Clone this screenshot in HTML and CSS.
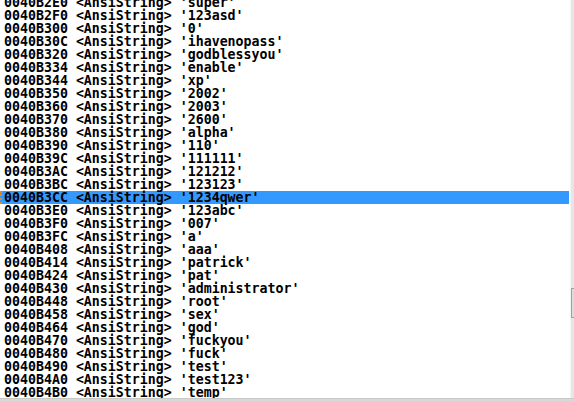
FILE: index.html
```html
<!DOCTYPE html>
<html>
<head>
<meta charset="utf-8">
<link rel="stylesheet" href="styles.css">
</head>
<body>
<div class="frame">
  <div class="top">
    <div class="list">
      <div class="row">0040B2E0 &lt;AnsiString&gt; 'super'</div>
      <div class="row">0040B2F0 &lt;AnsiString&gt; '123asd'</div>
      <div class="row">0040B300 &lt;AnsiString&gt; '0'</div>
      <div class="row">0040B30C &lt;AnsiString&gt; 'ihavenopass'</div>
      <div class="row">0040B320 &lt;AnsiString&gt; 'godblessyou'</div>
      <div class="row">0040B334 &lt;AnsiString&gt; 'enable'</div>
      <div class="row">0040B344 &lt;AnsiString&gt; 'xp'</div>
      <div class="row">0040B350 &lt;AnsiString&gt; '2002'</div>
      <div class="row">0040B360 &lt;AnsiString&gt; '2003'</div>
      <div class="row">0040B370 &lt;AnsiString&gt; '2600'</div>
      <div class="row">0040B380 &lt;AnsiString&gt; 'alpha'</div>
      <div class="row">0040B390 &lt;AnsiString&gt; '110'</div>
      <div class="row">0040B39C &lt;AnsiString&gt; '111111'</div>
      <div class="row">0040B3AC &lt;AnsiString&gt; '121212'</div>
      <div class="row">0040B3BC &lt;AnsiString&gt; '123123'</div>
      <div class="row sel">0040B3CC &lt;AnsiString&gt; '1234qwer'</div>
      <div class="row">0040B3E0 &lt;AnsiString&gt; '123abc'</div>
      <div class="row">0040B3F0 &lt;AnsiString&gt; '007'</div>
      <div class="row">0040B3FC &lt;AnsiString&gt; 'a'</div>
      <div class="row">0040B408 &lt;AnsiString&gt; 'aaa'</div>
      <div class="row">0040B414 &lt;AnsiString&gt; 'patrick'</div>
      <div class="row">0040B424 &lt;AnsiString&gt; 'pat'</div>
      <div class="row">0040B430 &lt;AnsiString&gt; 'administrator'</div>
      <div class="row">0040B448 &lt;AnsiString&gt; 'root'</div>
      <div class="row">0040B458 &lt;AnsiString&gt; 'sex'</div>
      <div class="row">0040B464 &lt;AnsiString&gt; 'god'</div>
      <div class="row">0040B470 &lt;AnsiString&gt; 'fuckyou'</div>
      <div class="row">0040B480 &lt;AnsiString&gt; 'fuck'</div>
      <div class="row">0040B490 &lt;AnsiString&gt; 'test'</div>
      <div class="row">0040B4A0 &lt;AnsiString&gt; 'test123'</div>
      <div class="row">0040B4B0 &lt;AnsiString&gt; 'temp'</div>
    </div>
    <div class="vscroll"><div class="thumb"></div></div>
  </div>
  <div class="hscroll"></div>
</div>
</body>
</html>
```
FILE: styles.css
```css
html, body {
  margin: 0;
  padding: 0;
  background: #ffffff;
  overflow: hidden;
}
.frame {
  width: 574px;
  height: 401px;
  display: flex;
  flex-direction: column;
}
.top {
  flex: 1;
  display: flex;
  overflow: hidden;
}
.list {
  flex: 1;
  margin-top: -4px;
  padding-right: 1px;
  overflow: hidden;
}
.row {
  height: 13px;
  line-height: 13px;
  padding-left: 4px;
  margin-left: 2px;
  margin-left: 0;
  white-space: pre;
  font-family: "DejaVu Sans Mono", monospace;
  font-weight: bold;
  font-size: 13.28px;
  color: #000;
  border-left: 2px solid transparent;
  box-sizing: border-box;
}
.row {
  padding-left: 2px;
}
.sel {
  background: #3399ff;
  border-left: 2px dotted #e08a2e;
  margin-left: 0;
}
.vscroll {
  width: 3px;
  background: #e6e6e6;
  border-left: 1px solid #f4f4f4;
  position: relative;
}
.thumb {
  position: absolute;
  left: 0;
  top: 288px;
  width: 3px;
  height: 30px;
  border: 1px solid #a0a0a0;
  border-right: 0;
  box-sizing: border-box;
  background: #dcdcdc;
}
.hscroll {
  height: 2px;
  background: #d8d8d8;
  border-top: 1px solid #c8c8c8;
}
```
